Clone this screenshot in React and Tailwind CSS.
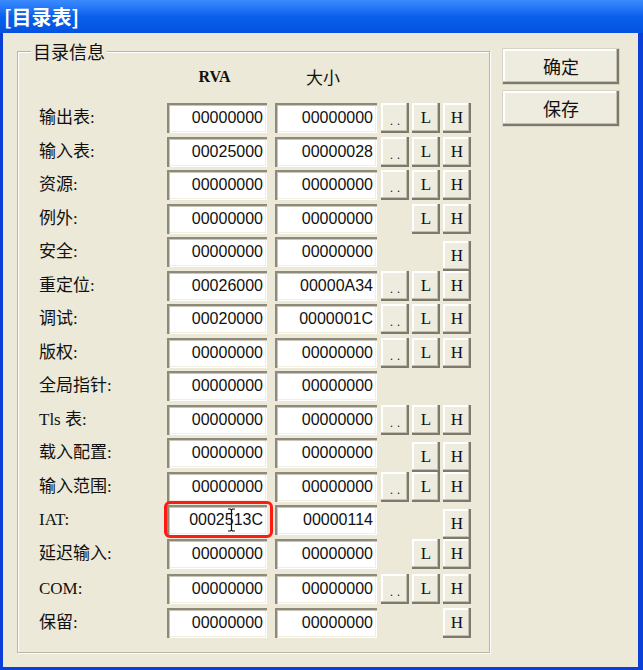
import React from "react";

const rows = [
  { label: "输出表:", rva: "00000000", size: "00000000", dots: true, l: true, h: true },
  { label: "输入表:", rva: "00025000", size: "00000028", dots: true, l: true, h: true },
  { label: "资源:", rva: "00000000", size: "00000000", dots: true, l: true, h: true },
  { label: "例外:", rva: "00000000", size: "00000000", l: true, h: true },
  { label: "安全:", rva: "00000000", size: "00000000", h: true, low: true },
  { label: "重定位:", rva: "00026000", size: "00000A34", dots: true, l: true, h: true },
  { label: "调试:", rva: "00020000", size: "0000001C", dots: true, l: true, h: true },
  { label: "版权:", rva: "00000000", size: "00000000", dots: true, l: true, h: true },
  { label: "全局指针:", rva: "00000000", size: "00000000" },
  { label: "Tls 表:", rva: "00000000", size: "00000000", dots: true, l: true, h: true },
  { label: "载入配置:", rva: "00000000", size: "00000000", l: true, h: true, low: true },
  { label: "输入范围:", rva: "00000000", size: "00000000", dots: true, l: true, h: true },
  { label: "IAT:", rva: "0002513C", size: "00000114", h: true, low: true, mark: true },
  { label: "延迟输入:", rva: "00000000", size: "00000000", l: true, h: true },
  { label: "COM:", rva: "00000000", size: "00000000", dots: true, l: true, h: true, gap: true },
  { label: "保留:", rva: "00000000", size: "00000000", h: true },
];

const cjk = { fontFamily: '"Liberation Serif", "Noto Sans CJK SC", serif' };
const sans = { fontFamily: '"Noto Sans CJK SC", "Liberation Sans", sans-serif' };

function Field({ value, width }) {
  return (
    <div
      className={`${width} h-full bg-white flex items-center justify-end pr-[4px] text-[16px] text-[#111] shadow-[inset_2px_2px_0_#8d8a7c,inset_3px_3px_0_#c9c6b8,inset_-1px_-1px_0_#ffffff,inset_-2px_-2px_0_#f1efe2]`}
      style={{ fontFamily: '"Liberation Sans", sans-serif' }}
    >
      {value}
    </div>
  );
}

function SmallButton({ children, dots }) {
  return (
    <div
      className={`w-[28px] h-[30px] bg-[#eeebdf] flex justify-center whitespace-nowrap text-[#111] shadow-[inset_-2px_-2px_0_#7d7a6d,inset_-3px_-3px_0_#c3c0b2,inset_2px_2px_0_#ffffff] ${
        dots ? "items-end pb-[6px] text-[12px] leading-none tracking-[4px] pl-[4px]" : "items-center text-[17px]"
      }`}
      style={{ fontFamily: '"Liberation Serif", serif' }}
    >
      {children}
    </div>
  );
}

function Row({ row }) {
  return (
    <div className={`flex items-stretch h-[30px] ${row.gap ? "mt-[2px]" : ""}`}>
      <div className="w-[128px] flex items-center text-[17px] text-[#111]" style={cjk}>
        {row.label}
      </div>
      <div className="relative">
        <Field value={row.rva} width="w-[100px]" />
        {row.mark && (
          <>
            <div className="absolute -left-[3px] -top-[4px] -right-[6px] -bottom-[3px] border-[3px] border-[#ff1a12] rounded-[6px]" />
            <svg className="absolute left-[60px] top-[3px]" width="9" height="24" viewBox="0 0 9 24">
              <path d="M1 1h2.5l1 1 1-1H8M4.5 2v20M1 23h2.5l1-1 1 1H8" stroke="#111" strokeWidth="1.2" fill="none" />
            </svg>
          </>
        )}
      </div>
      <div className="ml-[8px]">
        <Field value={row.size} width="w-[102px]" />
      </div>
      <div className={`ml-[4px] flex gap-[3px] ${row.low ? "mt-[4px]" : ""}`}>
        <div className="w-[28px]">{row.dots && <SmallButton dots>..</SmallButton>}</div>
        <div className="w-[28px]">{row.l && <SmallButton>L</SmallButton>}</div>
        <div className="w-[28px]">{row.h && <SmallButton>H</SmallButton>}</div>
      </div>
    </div>
  );
}

function BigButton({ children }) {
  return (
    <div
      className="w-[116px] h-[35px] bg-[#eeebdf] flex items-center justify-center text-[18px] text-[#111] shadow-[inset_-2px_-2px_0_#7d7a6d,inset_-3px_-3px_0_#c3c0b2,inset_2px_2px_0_#ffffff,0_0_0_1px_#d8d5c6]"
      style={sans}
    >
      {children}
    </div>
  );
}

export default function App() {
  return (
    <div className="w-[643px] h-[670px] flex flex-col bg-[#0a3fd8] overflow-hidden">
      {/* Title bar */}
      <div className="h-[33px] shrink-0 bg-linear-to-b from-[#3b8bff] via-[#0860ec] to-[#0552e0] flex items-center pl-[4px]">
        <span className="text-white font-bold text-[20px] leading-none" style={sans}>
          [目录表]
        </span>
      </div>

      {/* Body */}
      <div className="flex-1 ml-[3px] mr-[5px] mb-[3px] bg-[#ece9d8] flex items-start">
        <div className="relative ml-[14px] mt-[18px] w-[473px] h-[602px] border border-[#b8b5a3] shadow-[inset_1px_1px_0_#ffffff,1px_1px_0_#ffffff]">
          <div className="absolute left-[13px] -top-[14px] px-[2px] bg-[#ece9d8] text-[18px] leading-[26px] text-[#111]" style={sans}>
            目录信息
          </div>

          <div className="pl-[21px] pt-[13px]">
            <div className="flex h-[24px] items-center text-[#111]">
              <div className="w-[128px]" />
              <div className="w-[100px] text-center font-bold text-[16px] pr-[5px]" style={{ fontFamily: '"Liberation Serif", serif' }}>
                RVA
              </div>
              <div className="ml-[8px] w-[102px] text-center text-[17px] pr-[6px]" style={sans}>
                大小
              </div>
            </div>

            <div className="mt-[14px] flex flex-col gap-[3.5px]">
              {rows.map((row, i) => (
                <Row key={i} row={row} />
              ))}
            </div>
          </div>
        </div>

        <div className="ml-[13px] mt-[16px] flex flex-col gap-[7px]">
          <BigButton>确定</BigButton>
          <BigButton>保存</BigButton>
        </div>
      </div>
    </div>
  );
}
